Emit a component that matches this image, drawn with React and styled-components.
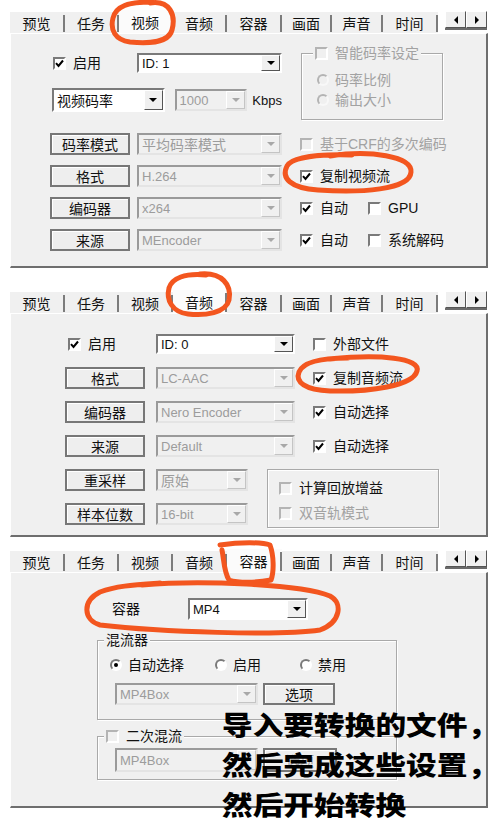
import styled, { createGlobalStyle } from 'styled-components'

const UI_FONT = `"Liberation Sans", "Noto Sans CJK SC", sans-serif`
const CJK_FONT = `"Noto Sans CJK SC", "Noto Sans", sans-serif`
const INK = '#f3561f'

const GlobalStyle = createGlobalStyle`
  html, body { margin: 0; padding: 0; background: #fff; }
  body { font-family: ${CJK_FONT}; }
`

const Page = styled.div`
  position: relative;
  width: 500px;
  height: 829px;
  overflow: hidden;
  box-sizing: border-box;
  padding-top: 10px;
  background: #fff;
`

const Window = styled.section`
  width: 478px;
  margin: ${p => p.$mt}px 0 0 10px;
`

const TabStrip = styled.div`
  display: flex;
  align-items: flex-end;
  height: 23px;
`

const Tab = styled.div`
  position: relative;
  width: ${p => p.$w}px;
  height: ${p => (p.$active ? 23 : 21)}px;
  box-sizing: border-box;
  padding-right: 2px;
  display: flex;
  align-items: center;
  justify-content: center;
  font: 14px ${CJK_FONT};
  color: #111;
  background: ${p => (p.$active ? '#fbfbfb' : '#f0f0f0')};
  &::after {
    content: '';
    position: absolute;
    right: 0;
    top: 3px;
    bottom: 1px;
    width: 2px;
    background: #7c7c7c;
  }
`

const Scroller = styled.div`
  display: flex;
  margin-left: 7px;
  margin-bottom: 3px;
  border-bottom: 2px solid #6a6a6a;
`

const ArrowBtn = styled.span`
  width: 21px;
  height: 17px;
  box-sizing: border-box;
  display: flex;
  align-items: center;
  justify-content: center;
  background: #f0f0f0;
  border: 1px solid;
  border-color: #fff #555 #555 #fff;
  &::before {
    content: '';
    border-top: 4px solid transparent;
    border-bottom: 4px solid transparent;
    ${p => (p.$dir === 'left' ? 'border-right: 4px solid #000;' : 'border-left: 4px solid #000;')}
  }
`

const Body = styled.div`
  height: ${p => p.$h}px;
  box-sizing: border-box;
  background: #f0f0f0;
  border-top: 1px solid #fff;
  border-left: 1px solid #fff;
  border-right: 2px solid #6e6e6e;
  border-bottom: 2px solid #6e6e6e;
  padding: ${p => p.$pad};
`

const Flex = styled.div`
  display: flex;
  align-items: ${p => p.$align || 'center'};
  gap: ${p => p.$gap || 0}px;
  margin-top: ${p => p.$mt || 0}px;
  margin-left: ${p => p.$ml || 0}px;
  height: ${p => (p.$h ? `${p.$h}px` : 'auto')};
`

const Column = styled.div`
  display: flex;
  flex-direction: column;
  gap: ${p => p.$gap || 0}px;
  width: ${p => (p.$w ? `${p.$w}px` : 'auto')};
  margin-top: ${p => p.$mt || 0}px;
`

const FormRow = styled.div`
  display: grid;
  grid-template-columns: 80px ${p => p.$combo}px 1fr;
  column-gap: ${p => p.$gap}px;
  align-items: center;
  height: 22px;
`

const RightCell = styled.div`
  display: flex;
  align-items: center;
  padding-left: ${p => p.$pl}px;
`

const CheckWrap = styled.label`
  display: inline-flex;
  align-items: center;
  gap: 7px;
  box-sizing: border-box;
  width: ${p => (p.$w ? `${p.$w}px` : 'auto')};
  padding-left: ${p => p.$pl || 0}px;
  margin-left: ${p => p.$ml || 0}px;
  height: 16px;
`

const Box = styled.span`
  flex: none;
  width: 13px;
  height: 13px;
  box-sizing: border-box;
  display: flex;
  align-items: center;
  justify-content: center;
  border: 2px solid;
  border-color: ${p => (p.$disabled ? '#b4b4b4 #fff #fff #b4b4b4' : '#7a7a7a #fff #fff #7a7a7a')};
  background: ${p => (p.$disabled ? '#f0f0f0' : '#fff')};
`

const Dot = styled.span`
  flex: none;
  width: 12px;
  height: 12px;
  box-sizing: border-box;
  border-radius: 50%;
  display: flex;
  align-items: center;
  justify-content: center;
  border: 2px solid;
  border-color: ${p => (p.$disabled ? '#b4b4b4 #f8f8f8 #f8f8f8 #b4b4b4' : '#7a7a7a #fff #fff #7a7a7a')};
  background: ${p => (p.$disabled ? '#f0f0f0' : '#fff')};
  &::after {
    content: '';
    display: ${p => (p.$on ? 'block' : 'none')};
    width: 4px;
    height: 4px;
    border-radius: 50%;
    background: #000;
  }
`

const Text = styled.span`
  font: 14px/16px ${UI_FONT};
  color: ${p => (p.$disabled ? '#a2a2a2' : '#111')};
  white-space: nowrap;
  margin-left: ${p => p.$ml || 0}px;
  width: ${p => (p.$w ? `${p.$w}px` : 'auto')};
  padding-left: ${p => p.$pl || 0}px;
  box-sizing: border-box;
`

const ComboBox = styled.div`
  width: ${p => p.$w}px;
  height: ${p => p.$h}px;
  margin-left: ${p => p.$ml || 0}px;
  box-sizing: border-box;
  display: flex;
  border: 2px solid;
  border-color: ${p => (p.$disabled ? '#9a9a9a #e4e4e4 #e4e4e4 #9a9a9a' : '#7a7a7a #fff #fff #7a7a7a')};
  background: ${p => (p.$disabled ? '#f0f0f0' : '#fff')};
`

const ComboText = styled.span`
  flex: 1;
  display: flex;
  align-items: center;
  padding-left: 3px;
  font: ${p => (p.$latin ? `13px ${UI_FONT}` : `14px ${CJK_FONT}`)};
  color: ${p => (p.$disabled ? '#9c9c9c' : '#111')};
  white-space: nowrap;
  overflow: hidden;
`

const DropBtn = styled.span`
  width: 19px;
  box-sizing: border-box;
  display: flex;
  align-items: center;
  justify-content: center;
  background: #f0f0f0;
  border: 1px solid;
  border-color: ${p => (p.$disabled ? '#fff #c4c4c4 #c4c4c4 #fff' : '#fff #555 #555 #fff')};
  &::before {
    content: '';
    border-left: 4px solid transparent;
    border-right: 4px solid transparent;
    border-top: 4px solid ${p => (p.$disabled ? '#a8a8a8' : '#000')};
  }
`

const Btn = styled.button`
  width: ${p => p.$w || 80}px;
  height: ${p => p.$h || 22}px;
  box-sizing: border-box;
  padding: 0;
  margin: 0;
  background: #eeeeee;
  border: 2px solid #777;
  box-shadow: inset 1px 1px 0 #fff;
  font: 14px ${CJK_FONT};
  line-height: 16px;
  color: ${p => (p.$disabled ? '#a0a0a0' : '#111')};
`

const Group = styled.fieldset`
  margin: ${p => p.$mt || 0}px 0 0 ${p => p.$ml || 0}px;
  padding: ${p => p.$pad || '0'};
  width: ${p => p.$w}px;
  height: ${p => p.$h}px;
  box-sizing: border-box;
  border: 1px solid #a9a9a9;
  box-shadow: inset 1px 1px 0 #fff, 1px 1px 0 #fff;
  min-width: 0;
`

const Legend = styled.legend`
  display: flex;
  align-items: center;
  gap: 7px;
  height: 18px;
  padding: 0 2px;
  margin-left: ${p => p.$ml || 0}px;
  background: #f0f0f0;
`

const Unit = styled.span`
  font: 13px ${UI_FONT};
  color: #111;
  margin-left: 5px;
`

const Ink = styled.svg`
  position: absolute;
  left: 0;
  top: 0;
  pointer-events: none;
`

const Note = styled.div`
  position: absolute;
  left: 222px;
  top: 704px;
  font: 900 26px/40px ${CJK_FONT};
  color: #000;
  white-space: nowrap;
  transform: scaleX(1.18);
  transform-origin: left top;
`

function Tick() {
  return (
    <svg width="9" height="9" viewBox="0 0 9 9">
      <path d="M1 4.2 L3.5 7 L8 1.5" fill="none" stroke="#000" strokeWidth="2" />
    </svg>
  )
}

function Check({ label, checked, disabled, dim, w, pl, ml }) {
  return (
    <CheckWrap $w={w} $pl={pl} $ml={ml}>
      <Box $disabled={disabled || dim}>{checked && <Tick />}</Box>
      {label && <Text $disabled={disabled}>{label}</Text>}
    </CheckWrap>
  )
}

function Radio({ label, on, disabled, w }) {
  return (
    <CheckWrap $w={w}>
      <Dot $on={on} $disabled={disabled} />
      <Text $disabled={disabled} $ml={-1}>{label}</Text>
    </CheckWrap>
  )
}

function Combo({ w, h = 22, value, disabled, latin, ml }) {
  return (
    <ComboBox $w={w} $h={h} $ml={ml} $disabled={disabled}>
      <ComboText $latin={latin} $disabled={disabled}>{value}</ComboText>
      <DropBtn $disabled={disabled} />
    </ComboBox>
  )
}

const TABS = [
  ['预览', 55], ['任务', 54], ['视频', 54], ['音频', 54],
  ['容器', 55], ['画面', 50], ['声音', 51], ['时间', 55],
]

function Tabs({ active }) {
  return (
    <TabStrip>
      {TABS.map(([name, w]) => (
        <Tab key={name} $w={w} $active={name === active}>{name}</Tab>
      ))}
      <Scroller>
        <ArrowBtn $dir="left" />
        <ArrowBtn $dir="right" />
      </Scroller>
    </TabStrip>
  )
}

function VideoPanel() {
  return (
    <Window $mt={0}>
      <Tabs active="视频" />
      <Body $h={235} $pad="10px 0 0 39px">
        <Flex $align="flex-start">
          <Column $w={232} $mt={9} $gap={15}>
            <Flex $h={20}>
              <Check label="启用" checked w={87} pl={3} />
              <Combo w={145} h={20} value="ID: 1" latin />
            </Flex>
            <Flex $h={24} $ml={2}>
              <Combo w={113} h={24} value="视频码率" />
              <Combo w={73} value="1000" latin disabled ml={10} />
              <Unit>Kbps</Unit>
            </Flex>
          </Column>
          <Group $ml={19} $w={142} $h={76} $pad="0 0 0 15px">
            <Legend $ml={-4}>
              <Box $disabled />
              <Text $disabled>智能码率设定</Text>
            </Legend>
            <Column $mt={10} $gap={4}>
              <Radio label="码率比例" disabled />
              <Radio label="输出大小" disabled />
            </Column>
          </Group>
        </Flex>
        <Column $mt={13} $gap={10}>
          <FormRow $combo={145} $gap={7}>
            <Btn>码率模式</Btn>
            <Combo w={145} value="平均码率模式" disabled />
            <RightCell $pl={11}><Check label="基于CRF的多次编码" disabled /></RightCell>
          </FormRow>
          <FormRow $combo={145} $gap={7}>
            <Btn>格式</Btn>
            <Combo w={145} value="H.264" latin disabled />
            <RightCell $pl={11}><Check label="复制视频流" checked /></RightCell>
          </FormRow>
          <FormRow $combo={145} $gap={7}>
            <Btn>编码器</Btn>
            <Combo w={145} value="x264" latin disabled />
            <RightCell $pl={11}>
              <Check label="自动" checked w={68} />
              <Check label="GPU" />
            </RightCell>
          </FormRow>
          <FormRow $combo={145} $gap={7}>
            <Btn>来源</Btn>
            <Combo w={145} value="MEncoder" latin disabled />
            <RightCell $pl={11}>
              <Check label="自动" checked w={68} />
              <Check label="系统解码" />
            </RightCell>
          </FormRow>
        </Column>
      </Body>
    </Window>
  )
}

function AudioPanel() {
  return (
    <Window $mt={22}>
      <Tabs active="音频" />
      <Body $h={224} $pad="19px 0 0 54px">
        <Column $gap={12}>
          <FormRow $combo={139} $gap={11}>
            <Check label="启用" checked pl={3} />
            <Combo w={139} h={20} value="ID: 0" latin />
            <RightCell $pl={7}><Check label="外部文件" /></RightCell>
          </FormRow>
          <FormRow $combo={139} $gap={11}>
            <Btn>格式</Btn>
            <Combo w={139} value="LC-AAC" latin disabled />
            <RightCell $pl={7}><Check label="复制音频流" checked /></RightCell>
          </FormRow>
          <FormRow $combo={139} $gap={11}>
            <Btn>编码器</Btn>
            <Combo w={139} value="Nero Encoder" latin disabled />
            <RightCell $pl={7}><Check label="自动选择" checked /></RightCell>
          </FormRow>
          <FormRow $combo={139} $gap={11}>
            <Btn>来源</Btn>
            <Combo w={139} value="Default" latin disabled />
            <RightCell $pl={7}><Check label="自动选择" checked /></RightCell>
          </FormRow>
        </Column>
        <Flex $align="flex-start" $mt={12}>
          <Column $gap={12}>
            <Flex $h={22}>
              <Btn>重采样</Btn>
              <Combo w={92} value="原始" disabled ml={11} />
            </Flex>
            <Flex $h={22}>
              <Btn>样本位数</Btn>
              <Combo w={92} value="16-bit" latin disabled ml={11} />
            </Flex>
          </Column>
          <Group $ml={19} $w={172} $h={59} $pad="10px 0 0 11px">
            <Column $gap={9}>
              <Check label="计算回放增益" dim />
              <Check label="双音轨模式" disabled />
            </Column>
          </Group>
        </Flex>
      </Body>
    </Window>
  )
}

function ContainerPanel() {
  return (
    <Window $mt={12}>
      <Tabs active="容器" />
      <Body $h={236} $pad="25px 0 0 86px">
        <Flex $h={22}>
          <Text $w={91} $pl={15}>容器</Text>
          <Combo w={120} value="MP4" latin />
        </Flex>
        <Group $mt={11} $w={300} $h={89} $pad="0 0 0 12px">
          <Legend $ml={-6}>
            <Text>混流器</Text>
          </Legend>
          <Flex $mt={8} $h={16}>
            <Radio label="自动选择" on w={105} />
            <Radio label="启用" w={85} />
            <Radio label="禁用" />
          </Flex>
          <Flex $mt={10} $ml={5} $gap={5}>
            <Combo w={143} value="MP4Box" latin disabled />
            <Btn $w={72}>选项</Btn>
          </Flex>
        </Group>
        <Group $mt={7} $w={300} $h={53} $pad="0 0 0 12px">
          <Legend $ml={-6}>
            <Box $disabled />
            <Text>二次混流</Text>
          </Legend>
          <Flex $mt={3} $ml={5} $gap={5}>
            <Combo w={143} h={24} value="MP4Box" latin disabled />
            <Btn $w={74} $h={24} $disabled>选项</Btn>
          </Flex>
        </Group>
      </Body>
    </Window>
  )
}

function Annotations() {
  const stroke = { fill: 'none', stroke: INK, strokeWidth: 5, strokeLinecap: 'round', strokeLinejoin: 'round' }
  return (
    <Ink width="500" height="829" viewBox="0 0 500 829">
      <path {...stroke} d="M150 3 C170 0 176 15 172 30 C169 42 150 44 130 42 C115 40 110 30 113 18 C116 6 128 2 152 2" />
      <path {...stroke} d="M330 156 C370 150 412 156 411 172 C410 190 360 193 318 190 C290 188 281 178 287 166 C292 157 320 154 352 155" />
      <path {...stroke} d="M200 274 C222 272 232 285 229 300 C226 313 205 316 188 314 C172 312 166 300 169 288 C172 278 185 273 206 275" />
      <path {...stroke} d="M330 359 C380 354 421 358 417 371 C413 386 370 392 330 391 C305 390 295 382 299 372 C303 362 320 358 348 358" />
      <path {...stroke} d="M220 545 C240 542 262 542 270 545 C274 556 274 572 271 580 C256 583 238 583 229 580 C224 572 224 560 222 550" />
      <path {...stroke} d="M142 585 C200 580 300 584 330 596 C343 603 341 622 320 630 C280 636 160 632 100 625 C83 620 82 601 100 592 C116 586 132 585 160 583" />
    </Ink>
  )
}

export default function App() {
  return (
    <Page>
      <GlobalStyle />
      <VideoPanel />
      <AudioPanel />
      <ContainerPanel />
      <Annotations />
      <Note>
        导入要转换的文件，<br />
        然后完成这些设置，<br />
        然后开始转换
      </Note>
    </Page>
  )
}
